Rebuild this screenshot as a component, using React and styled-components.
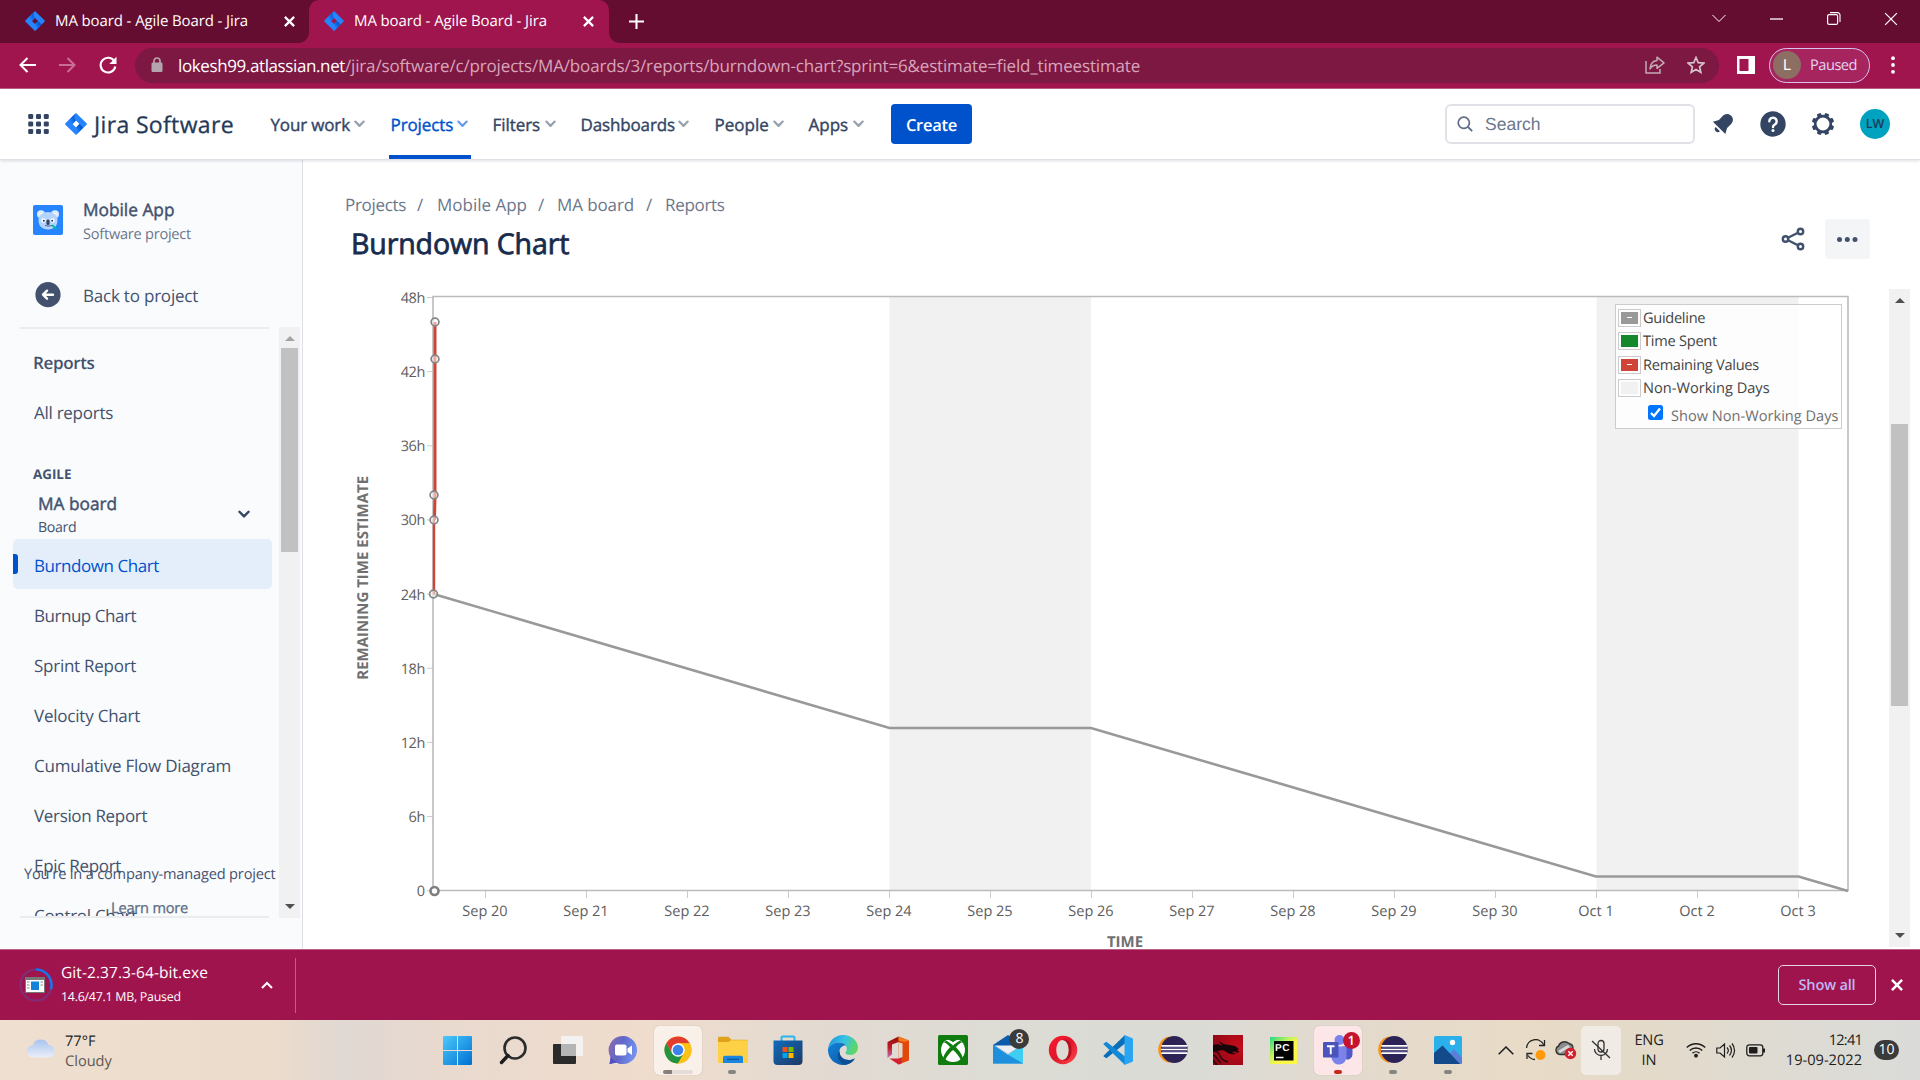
import React from "react";
import styled, { createGlobalStyle, css } from "styled-components";

const Global = createGlobalStyle`
  * { box-sizing: border-box; }
  body { margin: 0; background: #fff; overflow: hidden; }
  svg { display: block; flex: none; }
`;

const UI = `"Open Sans", "Noto Sans", sans-serif`;

const Screen = styled.div`
  width: 1920px;
  height: 1080px;
  display: flex;
  flex-direction: column;
  overflow: hidden;
  font-family: ${UI};
  font-size: 17px;
  color: #42526e;
  text-rendering: geometricPrecision;
`;

const Text = styled.span`
  display: block;
  flex: none;
  white-space: nowrap;
  font-size: ${(p) => p.$size || 17}px;
  line-height: ${(p) => p.$lh || 24}px;
  font-weight: ${(p) => p.$weight || 400};
  color: ${(p) => p.$color || "inherit"};
  letter-spacing: ${(p) => p.$ls || 0}px;
  -webkit-text-stroke: ${(p) => p.$stroke || 0}px currentColor;
`;

/* ---------- browser chrome ---------- */
const TabStrip = styled.div`
  height: 43px;
  flex: none;
  display: flex;
  background: #650d31;
  color: #fff;
`;
const Tab = styled.div`
  position: relative;
  width: ${(p) => p.$width}px;
  height: 43px;
  padding: 0 ${(p) => p.$end}px 1px ${(p) => p.$pad}px;
  display: flex;
  align-items: center;
  background: ${(p) => (p.$active ? "#a0154d" : "transparent")};
  border-radius: 10px 10px 0 0;
  ${(p) =>
    p.$active &&
    css`
      &::before, &::after {
        content: "";
        position: absolute;
        bottom: 0;
        width: 10px;
        height: 10px;
      }
      &::before { left: -10px; background: radial-gradient(circle at 0 0, transparent 9.5px, #a0154d 10px); }
      &::after { right: -10px; background: radial-gradient(circle at 100% 0, transparent 9.5px, #a0154d 10px); }
    `}
`;
const TabTitle = styled(Text)`
  margin-left: 10px;
  flex: 1;
`;
const NewTab = styled.div`
  width: 54px;
  display: grid;
  place-items: center;
  padding-bottom: 1px;
`;
const WindowButtons = styled.div`
  margin-left: auto;
  height: 37px;
  display: flex;
`;
const WindowButton = styled.div`
  width: 57.3px;
  display: grid;
  place-items: center;
`;

const Toolbar = styled.div`
  height: 46px;
  flex: none;
  display: flex;
  align-items: center;
  background: #a0154d;
  border-bottom: 1px solid #bd5f87;
  padding-left: 7px;
  padding-bottom: 1px;
`;
const ToolIcon = styled.div`
  width: ${(p) => p.$width || 40}px;
  padding-left: ${(p) => p.$pad || 0}px;
  display: grid;
  place-items: center;
`;
const Omnibox = styled.div`
  width: 1584px;
  height: 35px;
  margin-left: 8px;
  border-radius: 18px;
  background: #7d1843;
  display: flex;
  align-items: center;
  padding: 0 14px 0 15px;
  color: #d8a5b9;
`;
const Url = styled.div`
  display: flex;
  flex: 1;
  margin-left: 14px;
  padding-top: 2px;
`;
const OmniActions = styled.div`
  display: flex;
  align-items: center;
  gap: 22px;
`;
const ProfilePill = styled.div`
  width: 101px;
  height: 35px;
  border-radius: 18px;
  border: 1.5px solid #d9c3ee;
  background: #a7255e;
  display: flex;
  align-items: center;
  gap: 9px;
  padding-left: 3px;
  color: #e2d3f4;
`;
const ProfileBadge = styled.div`
  width: 28px;
  height: 28px;
  border-radius: 50%;
  background: #8d6e63;
  color: #fff;
  display: grid;
  place-items: center;
  font: 15px/28px Roboto, sans-serif;
`;

/* ---------- Jira header ---------- */
const Header = styled.header`
  position: relative;
  z-index: 1;
  height: 71px;
  flex: none;
  display: flex;
  align-items: center;
  background: #fff;
  border-bottom: 1px solid #dfe1e6;
  box-shadow: 0 1px 3px rgba(9, 30, 66, 0.14);
  padding-left: 28px;
`;
const Brand = styled.div`
  display: flex;
  align-items: center;
  gap: 7px;
  margin-left: 16px;
  width: 203.5px;
`;
const NavItem = styled.div`
  height: 70px;
  width: ${(p) => p.$width}px;
  margin-right: ${(p) => p.$gap || 0}px;
  flex: none;
  display: flex;
  align-items: center;
  justify-content: space-between;
  padding: 6px 3px 0 2px;
  color: ${(p) => (p.$active ? "#0052cc" : "#344563")};
  border-bottom: 4px solid ${(p) => (p.$active ? "#0052cc" : "transparent")};
  & > svg { margin-top: -3px; }
`;
const CreateButton = styled.div`
  width: 81px;
  height: 40px;
  border-radius: 4px;
  background: #0052cc;
  color: #fff;
  display: grid;
  place-items: center;
  padding-top: 1px;
  margin-left: 24.5px;
`;
const SearchBox = styled.div`
  width: 250px;
  height: 40px;
  margin-left: auto;
  border: 2px solid #dfe1e6;
  border-radius: 6px;
  display: flex;
  align-items: center;
  gap: 12px;
  padding-left: 10px;
  color: #6b778c;
  font-family: "Liberation Sans", Arial, sans-serif;
`;
const HeaderTools = styled.div`
  display: flex;
  align-items: center;
  width: 225px;
  padding-left: 3px;
`;
const HeaderTool = styled.div`
  width: 50px;
  display: grid;
  place-items: center;
`;
const UserAvatar = styled.div`
  width: 30px;
  height: 30px;
  margin-left: 12px;
  border-radius: 50%;
  background: #00a3bf;
  color: #1b3a5c;
  display: grid;
  place-items: center;
`;

/* ---------- body ---------- */
const Body = styled.div`
  height: 789px;
  flex: none;
  display: flex;
  overflow: hidden;
`;
const Sidebar = styled.aside`
  position: relative;
  width: 303px;
  flex: none;
  background: #fafbfc;
  border-right: 1px solid #dfe1e6;
  display: flex;
  flex-direction: column;
  padding-top: 39px;
`;
const ProjectRow = styled.div`
  height: 83px;
  display: flex;
  gap: 20px;
  padding-left: 33px;
  & > svg { margin-top: 6px; }
`;
const BackRow = styled.div`
  height: 45px;
  display: flex;
  align-items: flex-start;
  gap: 22px;
  padding-left: 35px;
`;
const ScrollArea = styled.div`
  height: 591px;
  display: flex;
`;
const ReportList = styled.div`
  width: 279px;
  overflow: hidden;
  display: flex;
  flex-direction: column;
`;
const Rule = styled.div`
  flex: none;
  height: 2px;
  width: 249px;
  margin-left: 20px;
  background: #ebecf0;
`;
const ListWindow = styled.div`
  flex: 1;
  overflow: hidden;
`;
const ListHeading = styled.div`
  padding: 22px 0 0 33px;
  height: 59px;
`;
const Entry = styled.div`
  position: relative;
  height: 50px;
  margin: 0 7px 0 13px;
  padding: ${(p) => p.$top || 15}px 0 0 21px;
  border-radius: 5px;
  background: ${(p) => (p.$selected ? "#e4eefb" : "transparent")};
  color: ${(p) => (p.$selected ? "#0052cc" : "#42526e")};
  ${(p) =>
    p.$selected &&
    css`
      &::before {
        content: "";
        position: absolute;
        left: 0;
        top: 15px;
        width: 5px;
        height: 20px;
        border-radius: 0 3px 3px 0;
        background: #0052cc;
      }
    `}
`;
const GroupTitle = styled.div`
  padding: 26px 0 0 33px;
  height: 54px;
`;
const BoardPicker = styled.div`
  height: 47px;
  display: flex;
  justify-content: space-between;
  padding: 1px 29px 0 38px;
  & > svg { margin-top: 17px; }
`;
const ManagedNote = styled.div`
  position: absolute;
  left: 24px;
  top: 703px;
  display: flex;
  flex-direction: column;
  gap: 12px;
  & > :last-child { margin-left: 87px; }
`;

const ScrollTrack = styled.div`
  width: 21px;
  height: ${(p) => p.$height}px;
  background: #f1f1f1;
  display: flex;
  flex-direction: column;
  align-items: center;
`;
const ScrollArrow = styled.div`
  width: 0;
  height: 0;
  border: 5px solid transparent;
  margin: ${(p) => (p.$up ? "4px 0 7px" : "auto 0 4px")};
  border-${(p) => (p.$up ? "bottom" : "top")}-color: ${(p) => (p.$dim ? "#a3a3a3" : "#505050")};
`;
const ScrollThumb = styled.div`
  width: 17px;
  height: ${(p) => p.$height}px;
  margin-top: ${(p) => p.$offset || 0}px;
  background: #c1c1c1;
`;

const Main = styled.main`
  position: relative;
  flex: 1;
  display: flex;
  flex-direction: column;
  padding-top: 33px;
`;
const Breadcrumbs = styled.div`
  display: flex;
  padding-left: 42px;
  color: #6b778c;
`;
const Crumb = styled(Text)`
  width: ${(p) => p.$width}px;
`;
const TitleRow = styled.div`
  height: 72px;
  display: flex;
  padding: 2px 50px 0 48px;
`;
const Actions = styled.div`
  margin-left: auto;
  display: flex;
  align-items: center;
  height: 40px;
  gap: 20px;
`;
const MoreButton = styled.div`
  width: 45px;
  height: 40px;
  border-radius: 4px;
  background: #f4f5f7;
  display: grid;
  place-items: center;
`;
const ChartRow = styled.div`
  position: relative;
  display: flex;
  & > svg { width: 1586px; height: 660px; }
`;
const Legend = styled.div`
  position: absolute;
  left: 1312px;
  top: 15px;
  width: 227px;
  height: 125px;
  border: 1px solid #ccc;
  background: rgba(255, 255, 255, 0.85);
  padding: 1px 0 0 2px;
  color: #444;
`;
const LegendRow = styled.div`
  height: 23.5px;
  display: flex;
  align-items: center;
  gap: 2px;
`;
const Swatch = styled.div`
  width: 23px;
  height: 18px;
  border: 1px solid #ccc;
  background: ${(p) => p.$color} content-box;
  padding: 2px;
  display: grid;
  place-items: center;
  &::after {
    content: "";
    width: 5px;
    height: 1px;
    background: ${(p) => (p.$dash ? "#fff" : "transparent")};
  }
`;
const LegendToggle = styled.div`
  display: flex;
  gap: 8px;
  padding: 2px 0 0 30px;
  color: #707070;
  & > svg { margin-top: 3px; }
`;

/* ---------- downloads ---------- */
const DownloadBar = styled.div`
  height: 71px;
  flex: none;
  display: flex;
  align-items: center;
  background: #a0144d;
  border-top: 1px solid #bd5f87;
  color: #fff;
  padding-left: 19px;
`;
const DownloadItem = styled.div`
  width: 277px;
  height: 55px;
  display: flex;
  align-items: center;
  border-right: 1px solid #bd5f87;
`;
const DownloadText = styled.div`
  width: 199.5px;
  margin-left: 8px;
`;
const ShowAll = styled.div`
  width: 98px;
  height: 40px;
  margin-left: auto;
  border: 1.5px solid #e3d3e6;
  border-radius: 5px;
  color: #bfb6f4;
  display: grid;
  place-items: center;
`;
const CloseBar = styled.div`
  width: 44px;
  display: flex;
  justify-content: center;
  padding-right: 2px;
`;

/* ---------- taskbar ---------- */
const Taskbar = styled.div`
  height: 60px;
  flex: none;
  display: flex;
  background: linear-gradient(90deg, #eedfd0 0, #ecdccb 270px, #e0d8d3 345px, #e8d9cf 430px, #efdccc 640px, #e2dad2 830px, #dcdcd5 1010px, #dbdbd6 1200px, #e5dacb 1400px, #e8dbc7 1520px, #e4dac9 1640px, #dedbd3 1780px, #dadbd9 1920px);
  color: #1d1d1d;
`;
const Weather = styled.div`
  width: 430px;
  display: flex;
  gap: 9px;
  padding: 11px 0 0 26px;
  & > svg { margin-top: 6px; }
`;
const AppSlot = styled.div`
  position: relative;
  width: 55.05px;
  height: 60px;
  display: grid;
  place-items: center;
`;
const AppTile = styled.div`
  width: 48px;
  height: 49px;
  border-radius: 5px;
  background: ${(p) => p.$fill || "transparent"};
  box-shadow: ${(p) => (p.$fill ? "0 0 1px rgba(0,0,0,.25)" : "none")};
  display: grid;
  place-items: center;
`;
const Indicator = styled.div`
  position: absolute;
  bottom: 6px;
  left: ${(p) => (p.$wide ? 13 : 23)}px;
  width: ${(p) => (p.$wide ? 30 : 8)}px;
  height: 4px;
  border-radius: 2px;
  background: ${(p) => (p.$wide ? "linear-gradient(90deg,#85807c 9px,#e3dcd8 9px)" : p.$color || "#858480")};
`;
const Badge = styled.div`
  position: absolute;
  left: ${(p) => p.$left}px;
  top: ${(p) => p.$top}px;
  width: ${(p) => p.$size}px;
  height: ${(p) => p.$size}px;
  border-radius: 50%;
  background: ${(p) => p.$color};
  color: #fff;
  display: grid;
  place-items: center;
`;
const Tray = styled.div`
  margin-left: auto;
  width: 429px;
  display: flex;
  align-items: center;
`;
const TrayIcon = styled.div`
  width: ${(p) => p.$width || 30}px;
  display: grid;
  place-items: center;
`;
const MicTile = styled.div`
  width: 40px;
  height: 49px;
  border-radius: 5px;
  background: #f0ebe4;
  display: grid;
  place-items: center;
`;
const Stack = styled.div`
  width: ${(p) => p.$width}px;
  display: flex;
  flex-direction: column;
  align-items: ${(p) => p.$align || "center"};
`;
const CountPill = styled.div`
  width: 25px;
  height: 20px;
  margin-left: 12px;
  border-radius: 10px;
  background: #3b3b3b;
  color: #fff;
  display: grid;
  place-items: center;
`;

/* ---------- icons ---------- */
const JiraMark = ({ w = 20, h = 20, id }) => (
  <svg width={w} height={h} viewBox="0 0 20 20" preserveAspectRatio="none">
    <defs>
      <linearGradient id={id} x1="0.9" y1="0.1" x2="0.2" y2="0.9">
        <stop offset="0.15" stopColor="#0052cc" />
        <stop offset="1" stopColor="#2684ff" />
      </linearGradient>
    </defs>
    <path fillRule="evenodd" fill="#2684ff" d="M10 0l9.400 9.200a1.100 1.100 0 0 1 0 1.600L10 20 .6 10.800a1.100 1.100 0 0 1 0-1.600zM10 6.900L6.900 10l3.100 3.100 3.100-3.100z" />
    <path fill={`url(#${id})`} d="M10 6.900C7.900 4.900 7.900 2.100 10 0L3.500 6.500 6.900 10z" />
    <path fill={`url(#${id})`} d="M13.100 10L10 13.100c2.100 2 2.100 4.800 0 6.900l6.500-6.500z" />
  </svg>
);
const Cross = ({ s = 10, w = 2, c = "#fff" }) => (
  <svg width={s} height={s} viewBox="0 0 10 10"><path d="M.8.8l8.400 8.400M9.200.8L.8 9.200" stroke={c} strokeWidth={w} /></svg>
);
const Chevron = ({ c = "#97a0af", s = 11, w = 2.2 }) => (
  <svg width={s} height={s * 0.7} viewBox="0 0 11 7.700"><path d="M1.300 1.600l4.200 4.300 4.200-4.300" fill="none" stroke={c} strokeWidth={w} strokeLinecap="round" strokeLinejoin="round" /></svg>
);
const Koala = () => (
  <svg width="30" height="30" viewBox="0 0 30 30">
    <rect width="30" height="30" rx="2" fill="#2684ff" />
    <circle cx="8" cy="9.300" r="4" fill="#deebff" /><circle cx="22" cy="9.300" r="4" fill="#deebff" />
    <circle cx="8.500" cy="10" r="2.200" fill="#fff" /><circle cx="21.500" cy="10" r="2.200" fill="#fff" />
    <path d="M5.500 15c0-5 4-8 9.500-8s9.500 3 9.500 8c0 6-3.500 9.500-9.500 9.500S5.500 21 5.500 15z" fill="#b3d4ff" />
    <circle cx="10.500" cy="15.500" r="2.200" fill="#fff" /><circle cx="19.500" cy="15.500" r="2.200" fill="#fff" />
    <circle cx="10.800" cy="15.700" r="1" fill="#253858" /><circle cx="19.200" cy="15.700" r="1" fill="#253858" />
    <rect x="13.400" y="14.500" width="3.200" height="5.500" rx="1.500" fill="#344563" />
    <path d="M12 20.300c2 1 5 1 7 0" stroke="#344563" strokeWidth=".8" fill="none" />
    <path d="M18 20.500l2-1 4.500 4.500-2 .5z" fill="#00b8a9" />
  </svg>
);
const BackBadge = () => (
  <svg width="26" height="26" viewBox="0 0 26 26">
    <circle cx="13" cy="12.700" r="12.600" fill="#42526e" />
    <path d="M18 12.700H8.500M12 8.700l-4 4 4 4" fill="none" stroke="#fff" strokeWidth="2.400" strokeLinecap="round" strokeLinejoin="round" />
  </svg>
);

const EclipseIcon = () => (
  <svg width="30" height="30" viewBox="0 0 30 30">
    <path d="M10.500 1.500C4 3 .2 8.500.2 14.500S4 26 10.500 27.700L14 26V3z" fill="#f7941e" />
    <circle cx="16.300" cy="14.500" r="13.400" fill="#2c2255" />
    <path d="M3.300 10.800h26M3 14.500h26.600M3.300 18.200h26" stroke="#fff" strokeWidth="1.700" />
    <path d="M4 12.700h24.500M4 16.400h24.500" stroke="#57508c" strokeWidth="1.300" />
  </svg>
);

const appIcons = {
  start: (
    <svg width="29" height="29" viewBox="0 0 29 29">
      <defs><linearGradient id="win" x1="0" y1="0" x2="1" y2="1"><stop offset="0" stopColor="#4cc9fb" /><stop offset="1" stopColor="#0070d2" /></linearGradient></defs>
      <path fill="url(#win)" d="M1 0h13v14H0V1a1 1 0 0 1 1-1zM15 0h13a1 1 0 0 1 1 1v13H15zM0 15h14v14H1a1 1 0 0 1-1-1zM15 15h14v13a1 1 0 0 1-1 1H15z" />
    </svg>
  ),
  search: (
    <svg width="28" height="29" viewBox="0 0 28 29">
      <circle cx="16" cy="12" r="10.500" fill="none" stroke="#2b2b2b" strokeWidth="2.600" />
      <path d="M9 19.500L2.500 26.500" stroke="#1d1d1d" strokeWidth="3.400" strokeLinecap="round" />
    </svg>
  ),
  taskview: (
    <svg width="30" height="29" viewBox="0 0 30 29">
      <rect x="0" y="8" width="23" height="20" rx="1" fill="#2b2b2b" />
      <rect x="8" y="0" width="22" height="20" rx="1" fill="#f4f2f0" />
      <rect x="8" y="8" width="15" height="12" fill="#b5b5b5" />
    </svg>
  ),
  chat: (
    <svg width="30" height="30" viewBox="0 0 30 30">
      <defs><linearGradient id="chat" x1="0" y1="0" x2="1" y2=".3"><stop offset="0" stopColor="#8f6cb0" /><stop offset=".5" stopColor="#6266c8" /><stop offset="1" stopColor="#7190ee" /></linearGradient></defs>
      <path d="M15 1a14 14 0 1 1-6.500 26.400L1.500 29l1.200-6.800A14 14 0 0 1 15 1z" fill="url(#chat)" />
      <path d="M2 20a14 14 0 0 0 26.500-2C27 26 17 31 8.500 27.400L1.500 29l1.200-6.800z" fill="#5050c4" />
      <rect x="7" y="9.500" width="11.500" height="11" rx="2" fill="#fff" /><path d="M19.500 13.500l4.500-3v9.500l-4.500-3z" fill="#fff" />
    </svg>
  ),
  chrome: (
    <svg width="28" height="28" viewBox="0 0 28 28">
      <circle cx="14" cy="14" r="13.500" fill="#fbc116" />
      <path d="M14 7.250h11.700A13.500 13.500 0 0 0 2.300 7.250L8.150 17.400z" fill="#e33b2e" />
      <path d="M2.300 7.250A13.500 13.500 0 0 0 14 27.500l5.850-10.120L14 14 8.150 17.400z" fill="#229342" />
      <path d="M14 27.500A13.500 13.500 0 0 0 25.700 7.250H14l5.850 10.130z" fill="#fbc116" />
      <circle cx="14" cy="14" r="6.750" fill="#fff" /><circle cx="14" cy="14" r="5.300" fill="#3b82ec" />
    </svg>
  ),
  explorer: (
    <svg width="30" height="28" viewBox="0 0 30 28">
      <path d="M0 2a1.200 1.200 0 0 1 1.200-1.200h9.300l3 3H29a1 1 0 0 1 1 1V9H0z" fill="#e0a21a" />
      <path d="M0 6h10.500l2.500-1.700h16a1 1 0 0 1 1 1V27H0z" fill="#fdd045" />
      <path d="M5 27v-5.500A1.800 1.800 0 0 1 6.800 19.700h16.400a1.800 1.800 0 0 1 1.800 1.800V27z" fill="#1b86dd" />
      <path d="M9 23.300h12" stroke="#0b5a9c" strokeWidth="1.300" />
    </svg>
  ),
  store: (
    <svg width="30" height="30" viewBox="0 0 30 30">
      <defs><linearGradient id="store" x1="0" y1="0" x2="1" y2="1"><stop offset="0" stopColor="#0f6cbd" /><stop offset="1" stopColor="#203864" /></linearGradient></defs>
      <path d="M8.500 6V3a1.500 1.500 0 0 1 1.500-1.500h10A1.500 1.500 0 0 1 21.500 3v3" fill="none" stroke="#29b6f0" strokeWidth="2" />
      <path d="M.5 5.500h29V26a4 4 0 0 1-4 4h-21a4 4 0 0 1-4-4z" fill="url(#store)" />
      <path fill="#f25022" d="M9.500 12h5v5h-5z" /><path fill="#7fba00" d="M15.500 12h5v5h-5z" /><path fill="#00a4ef" d="M9.500 18h5v5h-5z" /><path fill="#ffb900" d="M15.500 18h5v5h-5z" />
    </svg>
  ),
  edge: (
    <svg width="30" height="30" viewBox="0 0 30 30">
      <defs>
        <linearGradient id="edgeTop" x1="0" y1=".2" x2="1" y2=".5"><stop offset="0" stopColor="#1c94d8" /><stop offset=".5" stopColor="#35c1e8" /><stop offset="1" stopColor="#5fd95c" /></linearGradient>
        <linearGradient id="edgeLow" x1="0" y1="0" x2="1" y2="1"><stop offset="0" stopColor="#1184d8" /><stop offset="1" stopColor="#0b52a0" /></linearGradient>
      </defs>
      <path d="M0 14C1 5.500 7.500 0 15 0c8.500 0 15 6 15 12.500 0 4.500-3.500 7.500-7.500 7.500-3 0-5-1-5-2.300 0-.8 1.300-1.500 1.300-3.700C18.800 10 15 7.500 11 7.500 6 7.500 2 10 0 14z" fill="url(#edgeTop)" />
      <path d="M0 14c2-4 6-6.500 11-6.500 3 0 5.500 1 7 3-3-.5-6.500 2-6.500 6C11.500 22 16 25 20.500 25c3 0 5-.8 6.500-1.800C24.500 27.500 20 30 15 30 6.500 30-.5 23 0 14z" fill="url(#edgeLow)" />
      <path d="M11.500 16.500C11.500 22 16 25 20.500 25c3 0 5-.8 6.500-1.800-2 3.500-5.500 6-9.500 6.600C11 28 7 20 11.500 16.500z" fill="#0d4f94" />
    </svg>
  ),
  office: (
    <svg width="24" height="29" viewBox="0 0 24 29">
      <defs><linearGradient id="off" x1="0" y1="0" x2="0" y2="1"><stop offset="0" stopColor="#8f1010" /><stop offset=".5" stopColor="#c01c22" /><stop offset="1" stopColor="#c46fc0" /></linearGradient></defs>
      <path d="M12.500.5L1.500 6v16l4.500-3.500V8.500l8-3z" fill="url(#off)" />
      <path d="M12.500.5l10.500 4V24.500l-10.500 4V5.500z" fill="#e2480c" />
      <path d="M12.500.5l10.500 4-4.500 1.500-6-1.500z" fill="#f07a1e" />
      <path d="M3.500 22.500h9l3-1v6l-3 1z" fill="#d3222f" />
      <path d="M12.500 6.500l4 1v13.500l-4 1.500z" fill="#dedad2" />
    </svg>
  ),
  xbox: (
    <svg width="30" height="30" viewBox="0 0 30 30">
      <rect width="30" height="30" rx="1.500" fill="#107c10" />
      <circle cx="15" cy="15" r="12" fill="#fff" />
      <path d="M8 4.800c2.500-.5 5 .8 7 2.400 2-1.600 4.500-2.900 7-2.400L20 2.500h-10z" fill="#107c10" />
      <path d="M5 23.300c1.500-5 5-9.800 10-13.300 5 3.500 8.500 8.300 10 13.300l-2 2C21 21 18 17.500 15 15c-3 2.500-6 6-8 10.300z" fill="#107c10" />
      <path d="M15 10.200L10.500 7 8 5.500l-2 2c2.200.2 4.500 2.500 6.200 5zM15 10.200L19.500 7 22 5.500l2 2c-2.200.2-4.500 2.500-6.200 5z" fill="#107c10" />
    </svg>
  ),
  mail: (
    <svg width="30" height="30" viewBox="0 0 30 30">
      <path d="M0 10L15 0l15 10-15 9z" fill="#0b5cab" />
      <path d="M0 10l15 10L30 10v18.500H0z" fill="#29abe8" /><path d="M0 10l15 10L30 28.500H0z" fill="#1e8fdd" /><path d="M30 10L15 19.500 30 28.500z" fill="#40cdf4" />
      <path d="M1.500 10.500L15 19l13.500-8.500z" fill="#eceff1" />
    </svg>
  ),
  opera: (
    <svg width="30" height="30" viewBox="0 0 30 30">
      <defs><linearGradient id="op" x1="0" y1="0" x2="1" y2="1"><stop offset="0" stopColor="#ff1b2d" /><stop offset=".5" stopColor="#e0162b" /><stop offset="1" stopColor="#ff4b4b" /></linearGradient></defs>
      <path fillRule="evenodd" d="M15 .8a14.200 14.200 0 1 0 0 28.400 14.200 14.200 0 0 0 0-28.400zM14.500 5c3.800 0 6.300 4.500 6.300 10s-2.500 10-6.300 10S8.300 20.500 8.300 15 10.700 5 14.500 5z" fill="url(#op)" />
      <path d="M14.500 5c4-1.500 9 1 9 10s-5 11.500-9 10c3.800 0 6.300-4.500 6.300-10S18.300 5 14.500 5z" fill="#b5101f" />
    </svg>
  ),
  vscode: (
    <svg width="30" height="30" viewBox="0 0 30 30">
      <path d="M22 0v8.500L3.500 23.300 1 21.800a1 1 0 0 1 0-1.600z" fill="#0a6fb8" />
      <path d="M22 30v-8.500L3.500 6.700 1 8.200a1 1 0 0 0 0 1.600z" fill="#1488d8" />
      <path d="M21.500 0l7.500 3a1.700 1.700 0 0 1 1 1.500v21A1.700 1.700 0 0 1 29 27l-7.500 3z" fill="#2aa5f2" />
    </svg>
  ),
  eclipse: <EclipseIcon />,
  dragon: (
    <svg width="30" height="30" viewBox="0 0 30 30">
      <defs><radialGradient id="dr" cx=".8" cy=".4" r="1"><stop offset="0" stopColor="#c80c1a" /><stop offset="1" stopColor="#860714" /></radialGradient></defs>
      <rect width="30" height="30" fill="url(#dr)" />
      <path d="M0 10c4-1 6-1 9 1L6 6c4 3 7 4 11 4l5 1 4 3-2 1 2 1.500-1.500 1.500-3-1.500-2.500.5 4 2c-5 1-9-1-11-3-4-2-8 1-12 1z" fill="#16060a" />
      <path d="M0 16c3 0 6 2 7 5s4 5 8 6M0 20c4 1 4 5 8 8M0 25l4 5" stroke="#2c0710" strokeWidth="1.500" fill="none" />
    </svg>
  ),
  pycharm: (
    <svg width="27" height="27" viewBox="0 0 27 27">
      <defs><linearGradient id="pc" x1="0" y1="0" x2="1" y2="1"><stop offset="0" stopColor="#21d789" /><stop offset=".35" stopColor="#b8f05c" /><stop offset=".6" stopColor="#fcf84a" /></linearGradient></defs>
      <rect width="27" height="27" fill="url(#pc)" /><rect x="4" y="4" width="19.500" height="19.500" fill="#000" />
      <text x="5" y="14" fontFamily="Liberation Sans, Arial, sans-serif" fontWeight="700" fontSize="10" fill="#fff" textLength="14.500">PC</text>
      <path d="M6 20.500h7.500" stroke="#fff" strokeWidth="1.500" />
    </svg>
  ),
  teams: (
    <svg width="30" height="30" viewBox="0 0 30 30">
      <circle cx="16.500" cy="5" r="5" fill="#7b83eb" /><circle cx="25.500" cy="7.500" r="3.300" fill="#5059c9" />
      <path d="M19 11.500h10.500v8a5 5 0 0 1-8 4z" fill="#5059c9" />
      <path d="M8.500 11.500h15v10a7.500 7.500 0 0 1-15 1z" fill="#7b83eb" />
      <rect x="0" y="7" width="15.500" height="15.500" rx="1.200" fill="#4b53bc" />
      <path d="M4 11.200h7.500M7.750 11.200v8" stroke="#fff" strokeWidth="1.900" />
    </svg>
  ),
  photos: (
    <svg width="28" height="28" viewBox="0 0 28 28">
      <defs><clipPath id="ph"><rect width="28" height="28" rx="1.500" /></clipPath></defs>
      <g clipPath="url(#ph)"><rect width="28" height="28" fill="#2cb0ec" /><path d="M14 20l6-7 8 9v6H14z" fill="#5b7fd6" /><path d="M0 17l8.500-7.500L26 28H0z" fill="#134a8c" /><circle cx="18.500" cy="6.500" r="2.700" fill="#fff" /></g>
    </svg>
  ),
};

/* ---------- data ---------- */
const nav = [
  ["Your work", 99, 21, -0.15],
  ["Projects", 82, 20, -0.1],
  ["Filters", 68, 20, -0.05],
  ["Dashboards", 113, 21, -0.14],
  ["People", 74, 20, 0],
  ["Apps", 60, 0, 0],
];
const crumbs = [
  ["Projects", 72, -0.3], ["/", 20, 0], ["Mobile App", 101, 0], ["/", 19, 0],
  ["MA board", 89, -0.1], ["/", 19, 0], ["Reports", 80, -0.3],
];
const reports = [
  ["Burndown Chart", -0.43], ["Burnup Chart", -0.47], ["Sprint Report", -0.26], ["Velocity Chart", -0.22],
  ["Cumulative Flow Diagram", -0.22], ["Version Report", -0.33], ["Epic Report", -0.3], ["Control Chart", -0.3],
];
const days = ["Sep 20", "Sep 21", "Sep 22", "Sep 23", "Sep 24", "Sep 25", "Sep 26", "Sep 27", "Sep 28", "Sep 29", "Sep 30", "Oct 1", "Oct 2", "Oct 3"];
const hours = ["48h", "42h", "36h", "30h", "24h", "18h", "12h", "6h", "0"];
const legend = [
  ["Guideline", "#999", true, -0.3],
  ["Time Spent", "#14892c", false, -0.25],
  ["Remaining Values", "#d04437", true, -0.28],
  ["Non-Working Days", "#f1f1f1", false, 0],
];
const apps = [
  ["start"], ["search"], ["taskview"], ["chat"], ["chrome", { fill: "#f9f0ea", wide: true }], ["explorer", { dot: true }], ["store"], ["edge"], ["office"], ["xbox"],
  ["mail", { badge: "8" }], ["opera"], ["vscode"], ["eclipse"], ["dragon"], ["pycharm"], ["teams", { fill: "#fce6e8", alert: "1" }], ["eclipse", { dot: true }], ["photos", { dot: true }],
];
const points = [[435, 322], [435, 359], [434, 495], [434, 520], [433.5, 594]];

const Chart = () => (
  <svg viewBox="303 289 1586 660" fontFamily={UI} fontSize="14.500" fill="#5e5e5e">
    <rect x="889.500" y="297" width="201.500" height="593" fill="#f1f1f1" />
    <rect x="1596.500" y="297" width="202" height="593" fill="#f1f1f1" />
    {hours.map((h, i) => (
      <g key={h}>
        <path d={`M427 ${297.5 + i * 74.15}h6`} stroke="#ccc" strokeWidth="1" />
        <text x="425" y={303 + i * 74.15} textAnchor="end" letterSpacing={h === "0" ? 0 : -0.4}>{h}</text>
      </g>
    ))}
    {days.map((d, i) => (
      <g key={d}>
        <path d={`M${485.5 + i * 101} 891v7`} stroke="#ccc" />
        <text x={485 + i * 101} y="916" textAnchor="middle">{d}</text>
      </g>
    ))}
    <path d="M433 890.500V296.500H1848V890.500z" fill="none" stroke="#bbb" strokeWidth="1.600" />
    <path d="M433.500 594L889.500 728H1091L1596 876.500H1798.500L1848 891" fill="none" stroke="#999" strokeWidth="2.600" />
    <path d="M435 322V495L434.500 520" fill="none" stroke="#d04437" strokeWidth="3" />
    <path d="M434 520V594" fill="none" stroke="#d04437" strokeWidth="2.400" />
    {points.map(([x, y]) => (
      <circle key={y} cx={x} cy={y} r="3.900" fill="rgba(255,255,255,.55)" stroke="#858585" strokeWidth="1.700" />
    ))}
    <circle cx="434.500" cy="891" r="4" fill="#fff" stroke="#808080" strokeWidth="2.700" />
    <text x="1125" y="946.500" textAnchor="middle" fontSize="15" fontWeight="700" fill="#707070">TIME</text>
    <text transform="translate(368 577.800) rotate(-90)" textAnchor="middle" fontSize="15" fontWeight="700" fill="#707070">REMAINING TIME ESTIMATE</text>
  </svg>
);

export default function App() {
  return (
    <Screen>
      <Global />
      <TabStrip>
        <Tab $width={309} $pad={25} $end={14}>
          <JiraMark id="t1" /><TabTitle $size={15} $ls={-0.11}>MA board - Agile Board - Jira</TabTitle><Cross s={11} />
        </Tab>
        <Tab $width={300} $pad={15} $end={15} $active>
          <JiraMark id="t2" /><TabTitle $size={15} $ls={-0.11}>MA board - Agile Board - Jira</TabTitle><Cross s={11} />
        </Tab>
        <NewTab><svg width="15" height="15" viewBox="0 0 16 16"><path d="M8 0v16M0 8h16" stroke="#fff" strokeWidth="2.200" /></svg></NewTab>
        <WindowButtons>
          <WindowButton><svg width="14" height="9" viewBox="0 0 14 9"><path d="M.5 1l6.500 6.500L13.500 1" fill="none" stroke="#fff" strokeWidth="1" /></svg></WindowButton>
          <WindowButton><svg width="13" height="2" viewBox="0 0 13 2"><path d="M0 1h13" stroke="#fff" strokeWidth="1.300" /></svg></WindowButton>
          <WindowButton><svg width="14" height="13" viewBox="0 0 14 13"><rect x=".6" y="2.600" width="10" height="9.800" rx="1.500" fill="none" stroke="#fff" strokeWidth="1.200" /><path d="M3 .6h7.500A2.500 2.500 0 0 1 13 3.100V10" fill="none" stroke="#fff" strokeWidth="1.100" /></svg></WindowButton>
          <WindowButton><Cross s={14} w={0.9} /></WindowButton>
        </WindowButtons>
      </TabStrip>

      <Toolbar>
        <ToolIcon><svg width="17" height="16" viewBox="0 0 17 16"><path d="M17 8H2M8.500 1L1.500 8l7 7" fill="none" stroke="#fff" strokeWidth="2" /></svg></ToolIcon>
        <ToolIcon><svg width="17" height="16" viewBox="0 0 17 16"><path d="M0 8h15M8.500 1l7 7-7 7" fill="none" stroke="#c76f95" strokeWidth="2" /></svg></ToolIcon>
        <ToolIcon $pad={1}><svg width="18" height="18" viewBox="0 0 18 18"><path d="M15.500 5.500A7.400 7.400 0 1 0 16.300 10.500" fill="none" stroke="#fff" strokeWidth="2.100" /><path d="M17.500.8v7.200h-7.200z" fill="#fff" /></svg></ToolIcon>
        <Omnibox>
          <svg width="14" height="16" viewBox="0 0 14 16"><rect x="1.500" y="5.500" width="11" height="9.500" rx="1.300" fill="#b4a4ac" /><path d="M4 6V4a3 3 0 0 1 6 0v2" fill="none" stroke="#b4a4ac" strokeWidth="1.700" /></svg>
          <Url><Text $color="#fff" $ls={-0.39}>lokesh99.atlassian.net</Text><Text $ls={-0.16}>/jira/software/c/projects/MA/boards/3/reports/burndown-chart?sprint=6&amp;estimate=field_timeestimate</Text></Url>
          <OmniActions>
            <svg width="20" height="18" viewBox="0 0 20 18"><path d="M1 5v12h14v-4" fill="none" stroke="#c3aab5" strokeWidth="1.500" /><path d="M12 1.200l7 5.600-7 5.600V9c-3.500 0-5.500 1.300-7 4 .3-4.500 2.500-8 7-8.500z" fill="none" stroke="#c3aab5" strokeWidth="1.500" strokeLinejoin="round" /></svg>
            <svg width="18" height="18" viewBox="0 0 18 18"><path d="M9 1.500l2.200 5.100 5.600.5-4.200 3.700 1.200 5.500L9 13.400l-4.800 2.900 1.200-5.500L1.200 7.100l5.600-.5z" fill="none" stroke="#d3c2ca" strokeWidth="1.700" /></svg>
          </OmniActions>
        </Omnibox>
        <ToolIcon $width={50} $pad={4}><svg width="18" height="18" viewBox="0 0 18 18"><path fillRule="evenodd" fill="#fff" d="M0 0h18v18H0zM2.500 3v12h9V3z" /></svg></ToolIcon>
        <ProfilePill><ProfileBadge>L</ProfileBadge><Text $size={14.6} $lh={20} $ls={-0.48}>Paused</Text></ProfilePill>
        <ToolIcon $width={44} $pad={1}><svg width="4" height="18" viewBox="0 0 4 18"><circle cx="2" cy="2.200" r="1.900" fill="#fff" /><circle cx="2" cy="9" r="1.900" fill="#fff" /><circle cx="2" cy="15.800" r="1.900" fill="#fff" /></svg></ToolIcon>
      </Toolbar>

      <Header>
        <svg width="21" height="20" viewBox="0 0 21 20">{[0, 1, 2].map((r) => [0, 1, 2].map((c) => <rect key={`${r}${c}`} x={c * 7.8 + 0.2} y={r * 7.5} width="5" height="5" rx="1.300" fill="#344563" />))}</svg>
        <Brand><JiraMark id="t3" w={22} h={22} /><Text $size={23} $lh={30} $ls={0.35} $stroke={0.3} $color="#253858">Jira Software</Text></Brand>
        {nav.map(([label, w, gap, ls], i) => (
          <NavItem key={label} $width={w} $gap={gap} $active={i === 1}>
            <Text $stroke={0.4} $ls={ls}>{label}</Text><Chevron c={i === 1 ? "#6b9be8" : "#97a0af"} />
          </NavItem>
        ))}
        <CreateButton><Text $size={16.5} $weight={600} $ls={-0.25}>Create</Text></CreateButton>
        <SearchBox>
          <svg width="16" height="16" viewBox="0 0 16 16"><circle cx="6.800" cy="6.800" r="5.600" fill="none" stroke="#5e6c84" strokeWidth="1.700" /><path d="M11 11l4.200 4.200" stroke="#5e6c84" strokeWidth="1.800" /></svg>
          <Text $size={17.5}>Search</Text>
        </SearchBox>
        <HeaderTools>
          <HeaderTool><svg width="24" height="24" viewBox="0 0 24 24"><g transform="rotate(45 12 12)" fill="#344563"><path d="M12 .5c4 0 5.800 2.800 5.800 6.500v5l3 5.500H3.200l3-5.500V7C6.200 3.300 8 .5 12 .5z" /><path d="M9 19.300h6a3 3 0 0 1-6 0z" /></g></svg></HeaderTool>
          <HeaderTool><svg width="26" height="26" viewBox="0 0 26 26"><circle cx="13" cy="13" r="12.700" fill="#344563" /><path d="M9.300 10.300a3.700 3.700 0 1 1 5.600 3.200c-1.200.7-1.900 1.200-1.900 2.500" fill="none" stroke="#fff" strokeWidth="2.400" strokeLinecap="round" /><circle cx="13" cy="19.500" r="1.500" fill="#fff" /></svg></HeaderTool>
          <HeaderTool><svg width="24" height="24" viewBox="0 0 24 24"><circle cx="12" cy="12" r="7.800" fill="none" stroke="#344563" strokeWidth="2.700" />{[22.5, 67.5, 112.5, 157.5, 202.5, 247.5, 292.5, 337.5].map((a) => <rect key={a} x="9.800" y=".8" width="4.400" height="4" rx="1" fill="#344563" transform={`rotate(${a} 12 12)`} />)}</svg></HeaderTool>
          <UserAvatar><Text $size={12.5} $lh={16} $weight={600}>LW</Text></UserAvatar>
        </HeaderTools>
      </Header>

      <Body>
        <Sidebar>
          <ProjectRow>
            <Koala />
            <div><Text $size={17.3} $stroke={0.45}>Mobile App</Text><Text $size={14.6} $lh={22} $ls={-0.25} $color="#6b778c">Software project</Text></div>
          </ProjectRow>
          <BackRow><BackBadge /><Text $lh={28} $ls={-0.21}>Back to project</Text></BackRow>
          <ScrollArea>
            <ReportList>
              <Rule />
              <ListWindow>
                <ListHeading><Text $weight={600} $ls={-0.35}>Reports</Text></ListHeading>
                <Entry $top={13}><Text $ls={-0.27}>All reports</Text></Entry>
                <GroupTitle><Text $size={13.4} $lh={20} $weight={700}>AGILE</Text></GroupTitle>
                <BoardPicker>
                  <div><Text $size={17.3} $stroke={0.45}>MA board</Text><Text $size={14.2} $lh={22} $ls={-0.35}>Board</Text></div>
                  <Chevron c="#344563" s={12} />
                </BoardPicker>
                {reports.map(([r, ls], i) => <Entry key={r} $selected={i === 0}><Text $ls={ls}>{r}</Text></Entry>)}
              </ListWindow>
              <Rule />
            </ReportList>
            <ScrollTrack $height={591}><ScrollArrow $up $dim /><ScrollThumb $height={204} /><ScrollArrow /></ScrollTrack>
          </ScrollArea>
          <ManagedNote>
            <Text $size={14.6} $lh={22} $ls={-0.18}>You're in a company-managed project</Text>
            <Text $size={14.6} $lh={22} $ls={-0.2} $stroke={0.3} $color="#5e6c84">Learn more</Text>
          </ManagedNote>
        </Sidebar>

        <Main>
          <Breadcrumbs>
            {crumbs.map(([label, width, ls], i) => <Crumb key={i} $width={width} $ls={ls}>{label}</Crumb>)}
          </Breadcrumbs>
          <TitleRow>
            <Text $size={28.5} $lh={50} $stroke={0.8} $ls={-0.1} $color="#172b4d">Burndown Chart</Text>
            <Actions>
              <svg width="24" height="24" viewBox="0 0 24 24"><g fill="none" stroke="#42526e" strokeWidth="2.400"><circle cx="4.500" cy="12" r="2.700" /><circle cx="19.500" cy="4.500" r="2.700" /><circle cx="19.500" cy="19.500" r="2.700" /><path d="M7 10.700l10-5M7 13.300l10 5" /></g></svg>
              <MoreButton><svg width="21" height="5" viewBox="0 0 21 5"><circle cx="2.500" cy="2.500" r="2.500" fill="#42526e" /><circle cx="10.300" cy="2.500" r="2.500" fill="#42526e" /><circle cx="18" cy="2.500" r="2.500" fill="#42526e" /></svg></MoreButton>
            </Actions>
          </TitleRow>
          <ChartRow>
            <Chart />
            <Legend>
              {legend.map(([l, c, d, ls]) => <LegendRow key={l}><Swatch $color={c} $dash={d} /><Text $size={14.6} $lh={22} $ls={ls}>{l}</Text></LegendRow>)}
              <LegendToggle>
                <svg width="15" height="15" viewBox="0 0 15 15"><rect width="15" height="15" rx="2.500" fill="#0075ff" /><path d="M3 8l3 3 6-7.500" fill="none" stroke="#fff" strokeWidth="2.300" /></svg>
                <Text $size={14.6} $lh={28}>Show Non-Working Days</Text>
              </LegendToggle>
            </Legend>
            <ScrollTrack $height={658}><ScrollArrow $up /><ScrollThumb $height={282} $offset={114} /><ScrollArrow /></ScrollTrack>
          </ChartRow>
        </Main>
      </Body>

      <DownloadBar>
        <DownloadItem>
          <svg width="34" height="34" viewBox="0 0 34 34">
            <circle cx="17" cy="17" r="15.500" fill="none" stroke="#7f2f78" strokeWidth="2" /><path d="M17 1.500A15.500 15.500 0 0 1 31.800 21.500" fill="none" stroke="#1a73e8" strokeWidth="2.600" />
            <rect x="6.500" y="9.500" width="19" height="15" fill="#fff" stroke="#777" strokeWidth="1" /><rect x="6.500" y="9.500" width="19" height="2.500" fill="#777" /><rect x="12" y="13.500" width="8" height="8.500" fill="#1283d8" />
            <path d="M8 14h2.500M8 17h2.500M8 20h2.500M21.500 14H24M21.500 17H24" stroke="#888" strokeWidth="1" />
          </svg>
          <DownloadText><Text $size={15.5} $lh={24} $ls={0.07}>Git-2.37.3-64-bit.exe</Text><Text $size={12.4} $lh={26} $ls={-0.25}>14.6/47.1 MB, Paused</Text></DownloadText>
          <svg width="12" height="8" viewBox="0 0 12 8"><path d="M1 7l5-5 5 5" fill="none" stroke="#fff" strokeWidth="2" /></svg>
        </DownloadItem>
        <ShowAll><Text $size={14.6} $weight={600} $ls={-0.2}>Show all</Text></ShowAll>
        <CloseBar><Cross s={12} w={2.1} /></CloseBar>
      </DownloadBar>

      <Taskbar>
        <Weather>
          <svg width="30" height="22" viewBox="0 0 30 22"><defs><linearGradient id="cl" x1="0" y1="0" x2="0" y2="1"><stop offset="0" stopColor="#a9c3ee" /><stop offset="1" stopColor="#e9eff9" /></linearGradient></defs><path d="M7 20.500a6 6 0 0 1-.5-12 8.500 8.500 0 0 1 16-.5 6.300 6.300 0 0 1 1 12.500z" fill="url(#cl)" /></svg>
          <div><Text $size={14.6} $lh={20}>77°F</Text><Text $size={14.6} $lh={20} $color="#5d5853">Cloudy</Text></div>
        </Weather>
        {apps.map(([name, o = {}], i) => (
          <AppSlot key={i}>
            <AppTile $fill={o.fill}>{appIcons[name]}</AppTile>
            {o.wide && <Indicator $wide />}
            {o.dot && <Indicator />}
            {o.alert && <Indicator $color="#c42b1c" />}
            {o.badge && <Badge $left={29} $top={9} $size={20} $color="#3b3b3b"><Text $size={14} $lh={20}>{o.badge}</Text></Badge>}
            {o.alert && <Badge $left={32} $top={12} $size={17} $color="#c4122f"><Text $size={13} $lh={17} $weight={600}>{o.alert}</Text></Badge>}
          </AppSlot>
        ))}
        <Tray>
          <TrayIcon><svg width="16" height="9" viewBox="0 0 16 9"><path d="M.7 8.300L8 1l7.300 7.300" fill="none" stroke="#1d1d1d" strokeWidth="1.500" /></svg></TrayIcon>
          <TrayIcon><svg width="22" height="22" viewBox="0 0 22 22"><path d="M1.500 9a9 9 0 0 1 17-3.500M19.500 1v5.500H14M2 20v-5.500h5.500M3 16.500a9 9 0 0 0 7 4" fill="none" stroke="#222" strokeWidth="1.300" /><circle cx="15.500" cy="16" r="5" fill="#ff9a0a" /></svg></TrayIcon>
          <TrayIcon><svg width="22" height="20" viewBox="0 0 22 20"><path d="M5 14.500A4.500 4.500 0 0 1 3.500 6 6.500 6.500 0 0 1 14 3.500a5 5 0 0 1 4 5v6z" fill="#8b8b8b" stroke="#333" strokeWidth="1.400" /><path d="M4 12l10-6" stroke="#d8d8d8" strokeWidth="3" /><circle cx="15.500" cy="13.500" r="5.700" fill="#d3202e" /><path d="M13.300 11.300l4.400 4.400M17.700 11.300l-4.400 4.400" stroke="#fff" strokeWidth="1.400" /></svg></TrayIcon>
          <MicTile><svg width="20" height="22" viewBox="0 0 20 22"><g fill="none" stroke="#333" strokeWidth="1.300"><rect x="7" y="1.500" width="6" height="11.500" rx="3" /><path d="M3.500 10a6.500 6.500 0 0 0 13 0M10 16.500V21M1 2l18 17" /></g></svg></MicTile>
          <Stack $width={56}><Text $size={14.6} $lh={20} $ls={-0.2}>ENG</Text><Text $size={14.6} $lh={20}>IN</Text></Stack>
          <TrayIcon $width={38}><svg width="20" height="16" viewBox="0 0 20 16"><g fill="none" stroke="#1d1d1d" strokeWidth="1.400"><path d="M.8 5.500a13 13 0 0 1 18.400 0M3.700 8.500a9 9 0 0 1 12.600 0M6.500 11.300a5 5 0 0 1 7 0" /></g><circle cx="10" cy="13.700" r="1.900" fill="#1d1d1d" /></svg></TrayIcon>
          <TrayIcon $width={22}><svg width="20" height="17" viewBox="0 0 20 17"><g fill="none" stroke="#1d1d1d" strokeWidth="1.200"><path d="M.8 6v5H4l4.500 4V2L4 6zM11 5.500a4.500 4.500 0 0 1 0 6M13.500 3.500a7.500 7.500 0 0 1 0 10M16 1.500a11 11 0 0 1 0 14" /></g></svg></TrayIcon>
          <TrayIcon $width={38}><svg width="20" height="13" viewBox="0 0 20 13"><rect x=".8" y=".8" width="16" height="11" rx="2.500" fill="none" stroke="#1d1d1d" strokeWidth="1.300" /><rect x="3" y="3" width="8.500" height="6.600" rx="1" fill="#1d1d1d" /><path d="M18 4.500v4" stroke="#1d1d1d" strokeWidth="2" /></svg></TrayIcon>
          <Stack $width={87} $align="flex-end"><Text $size={14.6} $lh={20} $ls={-0.8}>12:41</Text><Text $size={14.6} $lh={20}>19-09-2022</Text></Stack>
          <CountPill><Text $size={14} $lh={20}>10</Text></CountPill>
        </Tray>
      </Taskbar>
    </Screen>
  );
}
